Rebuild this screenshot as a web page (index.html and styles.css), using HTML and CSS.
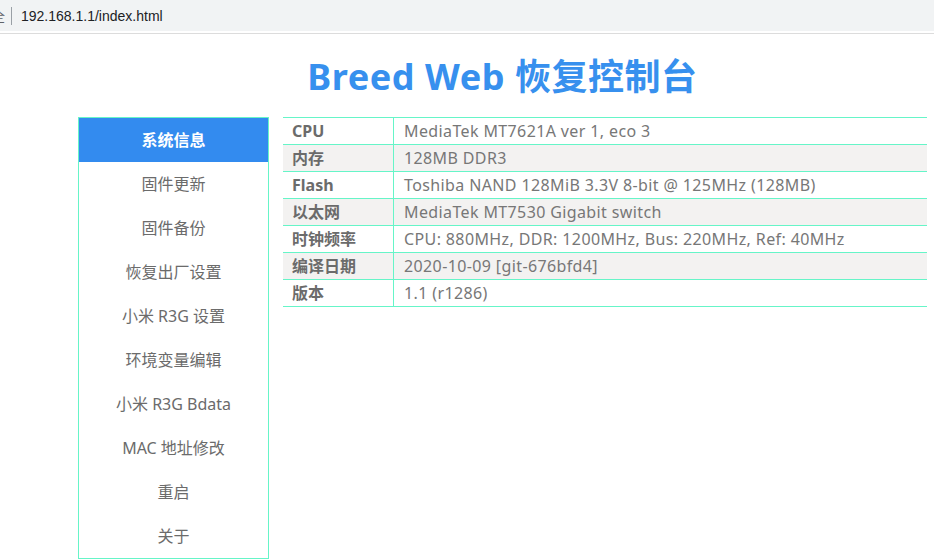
FILE: index.html
```html
<!DOCTYPE html>
<html lang="zh-CN">
<head>
<meta charset="utf-8">
<title>Breed Web 恢复控制台</title>
<link rel="stylesheet" href="styles.css">
</head>
<body>
<div class="addrbar">
  <div class="addr-inner">
    <span class="secure"><span class="secure-txt">不安全</span></span>
    <span class="divider"></span>
    <span class="url">192.168.1.1/index.html</span>
  </div>
</div>
<div class="addr-line"></div>
<div class="page">
  <h1 class="title">Breed Web 恢复控制台</h1>
  <div class="main">
    <ul class="menu">
      <li class="menu-item active">系统信息</li>
      <li class="menu-item">固件更新</li>
      <li class="menu-item">固件备份</li>
      <li class="menu-item">恢复出厂设置</li>
      <li class="menu-item">小米 R3G 设置</li>
      <li class="menu-item">环境变量编辑</li>
      <li class="menu-item">小米 R3G Bdata</li>
      <li class="menu-item">MAC 地址修改</li>
      <li class="menu-item">重启</li>
      <li class="menu-item">关于</li>
    </ul>
    <table class="info">
      <tr><td class="key">CPU</td><td class="val">MediaTek MT7621A ver 1, eco 3</td></tr>
      <tr class="alt"><td class="key">内存</td><td class="val">128MB DDR3</td></tr>
      <tr><td class="key">Flash</td><td class="val">Toshiba NAND 128MiB 3.3V 8-bit @ 125MHz (128MB)</td></tr>
      <tr class="alt"><td class="key">以太网</td><td class="val">MediaTek MT7530 Gigabit switch</td></tr>
      <tr><td class="key">时钟频率</td><td class="val">CPU: 880MHz, DDR: 1200MHz, Bus: 220MHz, Ref: 40MHz</td></tr>
      <tr class="alt"><td class="key">编译日期</td><td class="val">2020-10-09 [git-676bfd4]</td></tr>
      <tr><td class="key">版本</td><td class="val">1.1 (r1286)</td></tr>
    </table>
  </div>
</div>
</body>
</html>
```

FILE: styles.css
```css
html, body {
  margin: 0;
  padding: 0;
  background: #ffffff;
}
body {
  font-family: "Noto Sans", "Noto Sans CJK SC", sans-serif;
  color: #666666;
  overflow: hidden;
}
.addrbar {
  height: 31px;
  background: #f1f3f4;
  overflow: hidden;
}
.addr-inner {
  display: flex;
  align-items: center;
  height: 31px;
}
.secure {
  width: 5px;
  overflow: hidden;
  display: inline-block;
  height: 31px;
  position: relative;
}
.secure-txt {
  position: absolute;
  right: 0;
  top: 7px;
  font-size: 13px;
  line-height: 17px;
  white-space: nowrap;
  color: #5f6368;
  font-family: "Noto Sans CJK SC", sans-serif;
}
.divider {
  width: 1px;
  height: 18px;
  background: #9aa0a6;
  margin-left: 6px;
  margin-top: 1px;
}
.url {
  margin-left: 9px;
  font-family: "Liberation Sans", "Noto Sans", sans-serif;
  font-size: 14px;
  color: #202124;
  line-height: 18px;
  margin-top: 1px;
}
.addr-line {
  height: 1px;
  margin-top: 2px;
  background: #dcdcdc;
}
.page {
  margin-left: 78px;
  width: 849px;
}
.title {
  margin: 0;
  padding-top: 20px;
  height: 46px;
  line-height: 46px;
  margin-bottom: 17px;
  text-align: center;
  font-size: 36px;
  font-weight: bold;
  color: #3790ee;
  letter-spacing: 0.55px;
}
.main {
  display: flex;
  align-items: flex-start;
  gap: 14px;
}
.menu {
  list-style: none;
  margin: 0;
  padding: 0;
  width: 189px;
  border: 1px solid #66f5c8;
  flex: none;
}
.menu-item {
  height: 44px;
  line-height: 44px;
  text-align: center;
  font-size: 16px;
  color: #6b6b6b;
}
.menu-item.active {
  background: #338bef;
  color: #ffffff;
  font-weight: bold;
}
.info {
  width: 644px;
  border-collapse: collapse;
  border-top: 1px solid #66f5c8;
  font-size: 16px;
}
.info td {
  height: 26px;
  line-height: 26px;
  padding: 0;
  border-bottom: 1px solid #66f5c8;
  white-space: nowrap;
}
.info tr.alt td {
  background: #f3f2f1;
}
.key {
  width: 101px;
  padding-left: 9px !important;
  border-right: 1px solid #66f5c8;
  font-weight: bold;
  color: #6b6b6b;
}
.val {
  padding-left: 10px !important;
  color: #777777;
  letter-spacing: 0.38px;
}
```
